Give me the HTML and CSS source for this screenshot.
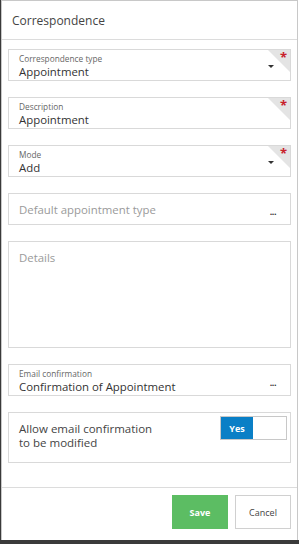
FILE: index.html
```html
<!DOCTYPE html>
<html lang="en">
<head>
    <meta charset="UTF-8">
    <meta name="viewport" content="width=device-width, initial-scale=1.0">
    <title>Correspondence</title>
    <link rel="stylesheet" href="styles.css">
</head>
<body>
    <div class="dialog">
        <div class="dialog-header">Correspondence</div>

        <div class="dialog-body">
            <!-- required select -->
            <div class="field required has-label">
                <span class="field-label">Correspondence type</span>
                <span class="field-value">Appointment</span>
                <span class="caret"></span>
            </div>

            <div class="field required has-label">
                <span class="field-label">Description</span>
                <span class="field-value">Appointment</span>
            </div>

            <div class="field required has-label">
                <span class="field-label">Mode</span>
                <span class="field-value">Add</span>
                <span class="caret"></span>
            </div>

            <div class="field">
                <span class="placeholder">Default appointment type</span>
                <span class="dots">...</span>
            </div>

            <div class="field textarea">
                <span class="placeholder">Details</span>
            </div>

            <div class="field has-label">
                <span class="field-label">Email confirmation</span>
                <span class="field-value">Confirmation of Appointment</span>
                <span class="dots">...</span>
            </div>

            <div class="switch-row">
                <span class="switch-text">Allow email confirmation<br>to be modified</span>
                <div class="switch">
                    <span class="switch-on">Yes</span>
                    <span class="switch-off"></span>
                </div>
            </div>
        </div>

        <div class="dialog-footer">
            <button class="btn btn-save">Save</button>
            <button class="btn btn-cancel">Cancel</button>
        </div>
    </div>
</body>
</html>
```

FILE: styles.css
```css
* {
    margin: 0;
    padding: 0;
    box-sizing: border-box;
}

html {
    background: #fff;
}

body {
    font-family: 'Open Sans', 'Noto Sans', sans-serif;
    color: #333;
    width: 299px;
    height: 544px;
    border-left: 1px solid #3a3a3a;
    border-bottom: 4px solid #3a3a3a;
}

.dialog {
    width: 297px;
    height: 540px;
    border: 1px solid #c8c8c8;
    border-bottom: none;
    background: #fff;
    display: flex;
    flex-direction: column;
}

.dialog-header {
    height: 39px;
    padding: 11px 0 0 10px;
    font-size: 12px;
    color: #444;
    border-bottom: 1px solid #dcdcdc;
}

.dialog-body {
    padding: 9px 6px 0 6px;
    display: flex;
    flex-direction: column;
    gap: 16px;
    flex: 1;
    border-bottom: 1px solid #dcdcdc;
}

.field {
    position: relative;
    height: 32px;
    flex-shrink: 0;
    border: 1px solid #d9d9d9;
    padding: 0 10px;
    display: flex;
    flex-direction: column;
    justify-content: center;
    overflow: hidden;
}

.field.has-label {
    justify-content: flex-start;
    padding-top: 3px;
}

.field-label {
    font-size: 8.3px;
    color: #666;
    line-height: 11px;
}

.field-value {
    font-size: 11.4px;
    color: #333;
    line-height: 16px;
}

.placeholder {
    font-size: 11.4px;
    color: #9a9a9a;
}

.field.textarea {
    height: 107px;
    justify-content: flex-start;
    padding-top: 8px;
}

/* grey corner with red star on required fields */
.field.required::before {
    content: '';
    position: absolute;
    top: 0;
    right: 0;
    border-style: solid;
    border-width: 0 22px 22px 0;
    border-color: transparent #e4e4e4 transparent transparent;
}

.field.required::after {
    content: '*';
    position: absolute;
    top: 1px;
    right: 3px;
    color: #c8202a;
    font-size: 13px;
    font-weight: bold;
    line-height: 12px;
}

.caret {
    position: absolute;
    right: 16px;
    top: 15px;
    border-style: solid;
    border-width: 3px 3px 0 3px;
    border-color: #333 transparent transparent transparent;
}

.dots {
    position: absolute;
    right: 14px;
    top: 13px;
    font-size: 9px;
    font-weight: bold;
    letter-spacing: -0.5px;
    color: #333;
    line-height: 10px;
}

.switch-row {
    height: 51px;
    flex-shrink: 0;
    border: 1px solid #d9d9d9;
    padding: 3px 3px 0 10px;
    display: flex;
    justify-content: space-between;
    align-items: flex-start;
}

.switch-text {
    font-size: 11.5px;
    color: #444;
    line-height: 14px;
    padding-top: 6px;
}

.switch {
    width: 67px;
    height: 24px;
    border: 1px solid #c8c8c8;
    display: flex;
}

.switch-on {
    width: 32px;
    background: #0a7fc6;
    color: #fff;
    font-size: 9px;
    font-weight: bold;
    display: flex;
    align-items: center;
    justify-content: center;
}

.switch-off {
    flex: 1;
    background: #fff;
}

.dialog-footer {
    height: 52px;
    display: flex;
    justify-content: flex-end;
    align-items: flex-start;
    gap: 7px;
    padding: 7px 6px 0 0;
}

.btn {
    height: 34px;
    font-family: 'Open Sans', 'Noto Sans', sans-serif;
    font-size: 9px;
    cursor: pointer;
}

.btn-save {
    width: 56px;
    background: #5cbd63;
    border: none;
    color: #fff;
    font-weight: bold;
}

.btn-cancel {
    width: 56px;
    background: #fff;
    border: 1px solid #d0d0d0;
    color: #444;
}
```
